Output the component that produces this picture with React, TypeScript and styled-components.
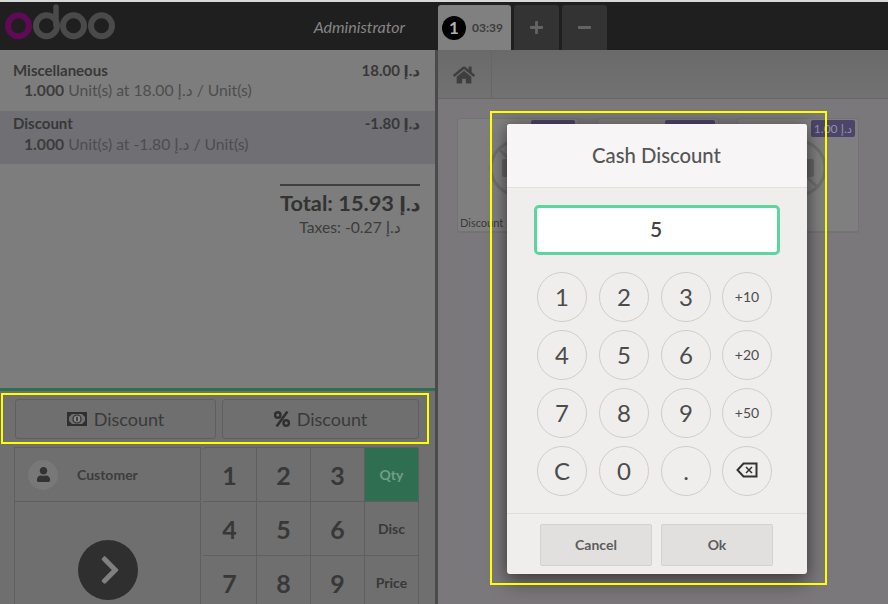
import React from 'react';
import styled, { createGlobalStyle } from 'styled-components';
import { FaChevronRight, FaHome, FaMinus, FaPlus, FaUser } from 'react-icons/fa';

const CUR = 'د.إ';
const FONT = `Lato, "DejaVu Sans", sans-serif`;

const GlobalStyle = createGlobalStyle`
  html, body {
    margin: 0;
    width: 888px;
    height: 604px;
    overflow: hidden;
    background: #7a7a7a;
    font-family: ${FONT};
  }
  * { box-sizing: border-box; }
`;

const Screen = styled('div')`
  position: relative;
  width: 888px;
  height: 604px;
  overflow: hidden;
  padding-top: 2px;
  display: flex;
  flex-direction: column;
  background: #7a7a7a;
`;
const TopLine = styled('div')`
  position: absolute;
  top: 0;
  left: 0;
  right: 0;
  height: 2px;
  background: #d8d8d8;
`;
const Header = styled('header')`
  height: 48px;
  flex: none;
  display: flex;
  background: #1f1f1f;
`;
const HeaderLeft = styled('div')`
  width: 438px;
  display: flex;
  align-items: center;
  justify-content: space-between;
  padding: 0 33px 0 5px;
`;
const LogoMark = styled('svg')`
  margin-bottom: 6px;
`;
const UserName = styled('span')`
  font-style: italic;
  font-size: 16px;
  color: #858585;
  margin-top: 1px;
`;
const Tabs = styled('div')`
  display: flex;
  gap: 3px;
  padding-top: 3px;
`;
const OrderTab = styled('div')`
  width: 73px;
  height: 45px;
  background: #808080;
  border-radius: 3px 3px 0 0;
  display: flex;
  align-items: center;
  gap: 6px;
  padding: 0 0 0 4px;
  font-size: 12px;
  font-weight: 700;
  color: #3c3c3c;
`;
const OrderNumber = styled('span')`
  width: 24px;
  height: 24px;
  border-radius: 50%;
  background: #000;
  color: #b0b0b0;
  font-size: 17px;
  display: flex;
  align-items: center;
  justify-content: center;
`;
const SquareTab = styled('div')`
  width: 45px;
  height: 45px;
  background: #333;
  border-radius: 3px 3px 0 0;
  color: #646464;
  font-size: 15px;
  display: flex;
  align-items: center;
  justify-content: center;
`;
const Body = styled('div')`
  flex: 1;
  display: flex;
  min-height: 0;
`;
const LeftPane = styled('div')`
  width: 438px;
  flex: none;
  display: flex;
  flex-direction: column;
  border-right: 3px solid #4a4a4a;
`;
const OrderArea = styled('div')`
  height: 338px;
  flex: none;
  background: #7d7d7d;
  color: #383838;
`;
const OrderLine = styled('div')<{ $selected?: boolean }>`
  height: ${p => (p.$selected ? 53 : 61)}px;
  padding: ${p => (p.$selected ? 2 : 10)}px 15px 0 13px;
  background: ${p => (p.$selected ? '#6f6f74' : 'transparent')};
`;
const LineTop = styled('div')`
  display: flex;
  justify-content: space-between;
  font-size: 15px;
  font-weight: 700;
  line-height: 20px;
`;
const LineInfo = styled('div')<{ $selected?: boolean }>`
  font-size: 15.7px;
  line-height: 21px;
  padding-left: 11px;
  padding-top: ${p => (p.$selected ? 1 : 0)}px;
  color: #4d4d4d;
  b { color: #3c3c3c; }
`;
const Summary = styled('div')`
  width: 140px;
  margin: 20px 0 0 280px;
  border-top: 2px solid #404040;
  text-align: center;
`;
const TotalText = styled('div')`
  font-size: 21.8px;
  font-weight: 700;
  line-height: 34px;
  white-space: nowrap;
  text-align: right;
  color: #333;
`;
const TotalCurrency = styled('span')`
  font-size: 19.5px;
`;
const TaxText = styled('div')`
  font-size: 15.7px;
  line-height: 12px;
  color: #3c3c3c;
`;
const Controls = styled('div')`
  flex: 1;
  background: #6f6f6f;
  border-top: 3px solid #2f6e50;
  padding: 8px 16px 0 14px;
`;
const ActionRow = styled('div')`
  display: flex;
  gap: 6px;
  height: 40px;
  margin-left: 1px;
`;
const ActionButton = styled('div')<{ $width: number }>`
  width: ${p => p.$width}px;
  border: 1px solid #5f5f5f;
  border-radius: 3px;
  display: flex;
  align-items: center;
  justify-content: center;
  gap: 7px;
  font-size: 18px;
  color: #3a3a3a;
`;
const PadRow = styled('div')`
  display: flex;
  margin-top: 8px;
`;
const CustomerColumn = styled('div')`
  width: 187px;
  height: 160px;
  border-left: 1px solid #5f5f5f;
  border-right: 1px solid #5f5f5f;
  border-top: 1px solid #5f5f5f;
  margin-right: 2px;
`;
const CustomerButton = styled('div')`
  height: 54px;
  display: flex;
  align-items: center;
  gap: 19px;
  padding-left: 13px;
  font-size: 14px;
  font-weight: 700;
  color: #3c3c3c;
  border-bottom: 1px solid #5f5f5f;
`;
const Avatar = styled('span')`
  width: 30px;
  height: 30px;
  border-radius: 50%;
  background: #787878;
  color: #333;
  font-size: 15px;
  display: flex;
  align-items: center;
  justify-content: center;
`;
const PayArea = styled('div')`
  display: flex;
  justify-content: center;
  padding-top: 38px;
`;
const PayButton = styled('div')`
  width: 60px;
  height: 60px;
  padding-left: 4px;
  border-radius: 50%;
  background: #2f2f2f;
  color: #808080;
  font-size: 32px;
  display: flex;
  align-items: center;
  justify-content: center;
`;
const NumGrid = styled('div')`
  display: grid;
  grid-template-columns: repeat(4, 54px);
  grid-auto-rows: 54px;
  border-top: 1px solid #5f5f5f;
  height: 160px;
  overflow: hidden;
  border-radius: 3px 3px 0 0;
`;
const NumKey = styled('div')<{ $mode?: boolean; $active?: boolean }>`
  display: flex;
  align-items: center;
  justify-content: center;
  border-right: 1px solid #5f5f5f;
  border-bottom: 1px solid #5f5f5f;
  font-size: ${p => (p.$mode ? 14 : 25)}px;
  font-weight: 700;
  background: ${p => (p.$active ? '#2f6e50' : 'transparent')};
  color: ${p => (p.$active ? '#6f9f85' : '#383838')};
`;
const RightPane = styled('div')`
  flex: 1;
  display: flex;
  flex-direction: column;
`;
const Breadcrumbs = styled('div')`
  height: 49px;
  flex: none;
  background: linear-gradient(#6a6a6a, #727272);
  border-bottom: 1px solid #666;
  display: flex;
`;
const HomeButton = styled('div')`
  width: 54px;
  border-right: 1px solid #666;
  display: flex;
  align-items: center;
  justify-content: center;
  color: #3e3e3e;
  font-size: 22px;
  padding: 2px 2px 0 0;
`;
const Products = styled('div')`
  flex: 1;
  background: #7a787a;
  display: flex;
  gap: 18px;
  padding: 19px 0 0 19px;
  align-items: flex-start;
`;
const ProductCard = styled('div')`
  position: relative;
  width: 122px;
  height: 115px;
  background: #7f7f7f;
  border: 1px solid #737373;
  border-bottom-width: 2px;
  border-radius: 3px;
  font-size: 11px;
  color: #3a3a3a;
  display: flex;
  align-items: flex-end;
  justify-content: center;
`;
const ProductName = styled('span')`
  width: 100%;
  padding: 0 0 2px 2px;
`;
const NoImage = styled('svg')`
  position: absolute;
  left: 30px;
  top: 19px;
`;
const PriceTag = styled('span')<{ $width: number }>`
  position: absolute;
  top: 1px;
  right: 3px;
  width: ${p => p.$width}px;
  height: 17px;
  border-radius: 2px;
  background: #4b4569;
  color: #928fa5;
  font-size: 12px;
  line-height: 17px;
  text-align: center;
`;
const Modal = styled('div')`
  position: absolute;
  left: 507px;
  top: 124px;
  width: 300px;
  height: 450px;
  background: #f0eeec;
  border-radius: 3px;
  box-shadow: 0 10px 20px rgba(0, 0, 0, 0.35), 0 0 14px rgba(0, 0, 0, 0.3);
  display: flex;
  flex-direction: column;
`;
const ModalTitle = styled('div')`
  height: 64px;
  flex: none;
  padding: 0 1px 1px 0;
  background: #f7f5f5;
  border-bottom: 1px solid #e2e0de;
  border-radius: 3px 3px 0 0;
  font-size: 20.3px;
  font-weight: 500;
  color: #555;
  display: flex;
  align-items: center;
  justify-content: center;
`;
const ValueBox = styled('div')`
  width: 246px;
  height: 50px;
  margin: 17px 0 0 27px;
  padding: 0 2px 3px 0;
  background: #fff;
  border: 3px solid #5dd5a0;
  border-radius: 5px;
  font-size: 21px;
  font-weight: 600;
  color: #444;
  display: flex;
  align-items: center;
  justify-content: center;
`;
const DialPad = styled('div')`
  display: grid;
  grid-template-columns: repeat(4, 50px);
  grid-auto-rows: 50px;
  column-gap: 12px;
  row-gap: 8px;
  margin: 17px 0 0 30px;
  width: 240px;
`;
const DialKey = styled('div')<{ $small?: boolean; $last?: boolean }>`
  width: 50px;
  height: 50px;
  padding-bottom: 2px;
  border: 1px solid #d0cecc;
  border-radius: 50%;
  display: flex;
  align-items: center;
  justify-content: center;
  font-size: ${p => (p.$small ? 14 : 24)}px;
  color: #4c4c4c;
  margin-left: ${p => (p.$last ? -1 : 0)}px;
`;
const ModalFooter = styled('div')`
  margin-top: 17px;
  border-top: 1px solid #e0dedc;
  padding: 10px 0 0 33px;
  display: flex;
  gap: 9px;
`;
const FooterButton = styled('div')`
  width: 112px;
  height: 42px;
  padding-bottom: 2px;
  background: #e2e0de;
  border: 1px solid #d4d2d0;
  border-radius: 2px;
  font-size: 14px;
  font-weight: 700;
  color: #5c5c5c;
  display: flex;
  align-items: center;
  justify-content: center;
`;
const Highlight = styled('div')<{ $x: number; $y: number; $w: number; $h: number }>`
  position: absolute;
  left: ${p => p.$x}px;
  top: ${p => p.$y}px;
  width: ${p => p.$w}px;
  height: ${p => p.$h}px;
  border: 2px solid #ffff00;
  pointer-events: none;
`;

const OdooLogo = () => (
  <LogoMark width="112" height="38" viewBox="0 0 112 38">
    <circle cx="13.5" cy="21.7" r="10.5" fill="none" stroke="#5e0a55" strokeWidth="6" />
    <circle cx="41.5" cy="21.7" r="10.5" fill="none" stroke="#4a4a4a" strokeWidth="6" />
    <path d="M51 3v18" fill="none" stroke="#4a4a4a" strokeWidth="5.5" strokeLinecap="round" />
    <circle cx="68.5" cy="21.7" r="10.5" fill="none" stroke="#4a4a4a" strokeWidth="6" />
    <circle cx="96.5" cy="21.7" r="10.5" fill="none" stroke="#4a4a4a" strokeWidth="6" />
  </LogoMark>
);

const NoPhoto = () => (
  <NoImage width="60" height="60" viewBox="0 0 60 60">
    <circle cx="30" cy="30" r="27" fill="none" stroke="#6f6f6f" strokeWidth="3" />
    <path d="M11 11l38 38" stroke="#6f6f6f" strokeWidth="3" />
    <rect x="14" y="21" width="32" height="18" rx="2" fill="#666" />
  </NoImage>
);

const MoneyIcon = () => (
  <svg width="20" height="14" viewBox="0 0 20 14">
    <rect x="1" y="1" width="18" height="12" fill="#6f6f6f" stroke="#2f2f2f" strokeWidth="2" />
    <path d="M2 2h3l-3 3zM18 2h-3l3 3zM2 12h3l-3-3zM18 12h-3l3-3z" fill="#2f2f2f" />
    <circle cx="10" cy="7" r="4" fill="#8a8a8a" stroke="#2f2f2f" strokeWidth="1.2" />
    <path d="M10 4.8v4.4" stroke="#2f2f2f" strokeWidth="1.6" />
  </svg>
);

const PercentIcon = () => (
  <svg width="16" height="16" viewBox="0 0 16 16">
    <circle cx="3.8" cy="4" r="2.7" fill="none" stroke="#2f2f2f" strokeWidth="2.4" />
    <circle cx="12.2" cy="12" r="2.7" fill="none" stroke="#2f2f2f" strokeWidth="2.4" />
    <path d="M13.4 .6L2.6 15.4" stroke="#2f2f2f" strokeWidth="2.6" />
  </svg>
);

const BackspaceIcon = () => (
  <svg width="22" height="16" viewBox="0 0 22 16">
    <path d="M7.5 1.5H20.5V14.5H7.5L1.5 8Z" fill="none" stroke="#333" strokeWidth="2" strokeLinejoin="miter" />
    <path d="M10 5l6 6M16 5l-6 6" stroke="#333" strokeWidth="1.5" />
  </svg>
);

const padKeys = ['1', '2', '3', '+10', '4', '5', '6', '+20', '7', '8', '9', '+50', 'C', '0', '.'];
const numKeys = ['1', '2', '3', 'Qty', '4', '5', '6', 'Disc', '7', '8', '9', 'Price'];

export default function App() {
  return (
    <Screen>
      <GlobalStyle />
      <TopLine />
      <Header>
        <HeaderLeft>
          <OdooLogo />
          <UserName>Administrator</UserName>
        </HeaderLeft>
        <Tabs>
          <OrderTab>
            <OrderNumber>1</OrderNumber>
            03:39
          </OrderTab>
          <SquareTab><FaPlus /></SquareTab>
          <SquareTab><FaMinus /></SquareTab>
        </Tabs>
      </Header>
      <Body>
        <LeftPane>
          <OrderArea>
            <OrderLine>
              <LineTop><span>Miscellaneous</span><span>18.00 {CUR}</span></LineTop>
              <LineInfo><b>1.000</b> Unit(s) at 18.00 {CUR} / Unit(s)</LineInfo>
            </OrderLine>
            <OrderLine $selected>
              <LineTop><span>Discount</span><span>-1.80 {CUR}</span></LineTop>
              <LineInfo $selected><b>1.000</b> Unit(s) at -1.80 {CUR} / Unit(s)</LineInfo>
            </OrderLine>
            <Summary>
              <TotalText>Total: 15.93 <TotalCurrency>{CUR}</TotalCurrency></TotalText>
              <TaxText>Taxes: -0.27 {CUR}</TaxText>
            </Summary>
          </OrderArea>
          <Controls>
            <ActionRow>
              <ActionButton $width={201}><MoneyIcon />Discount</ActionButton>
              <ActionButton $width={197}><PercentIcon />Discount</ActionButton>
            </ActionRow>
            <PadRow>
              <CustomerColumn>
                <CustomerButton>
                  <Avatar><FaUser /></Avatar>
                  Customer
                </CustomerButton>
                <PayArea>
                  <PayButton><FaChevronRight /></PayButton>
                </PayArea>
              </CustomerColumn>
              <NumGrid>
                {numKeys.map(k => (
                  <NumKey key={k} $mode={k.length > 1} $active={k === 'Qty'}>{k}</NumKey>
                ))}
              </NumGrid>
            </PadRow>
          </Controls>
        </LeftPane>
        <RightPane>
          <Breadcrumbs>
            <HomeButton><FaHome /></HomeButton>
          </Breadcrumbs>
          <Products>
            <ProductCard>
              <PriceTag $width={44} />
              <NoPhoto />
              <ProductName>Discount</ProductName>
            </ProductCard>
            <ProductCard>
              <PriceTag $width={50} />
            </ProductCard>
            <ProductCard>
              <PriceTag $width={44}>1.00 {CUR}</PriceTag>
              <NoPhoto />
            </ProductCard>
          </Products>
        </RightPane>
      </Body>
      <Modal>
        <ModalTitle>Cash Discount</ModalTitle>
        <ValueBox>5</ValueBox>
        <DialPad>
          {padKeys.map((k, i) => (
            <DialKey key={k} $small={k.startsWith('+')} $last={i % 4 === 3}>{k}</DialKey>
          ))}
          <DialKey $last><BackspaceIcon /></DialKey>
        </DialPad>
        <ModalFooter>
          <FooterButton>Cancel</FooterButton>
          <FooterButton>Ok</FooterButton>
        </ModalFooter>
      </Modal>
      <Highlight $x={1} $y={393} $w={428} $h={51} />
      <Highlight $x={490} $y={111} $w={337} $h={474} />
    </Screen>
  );
}
